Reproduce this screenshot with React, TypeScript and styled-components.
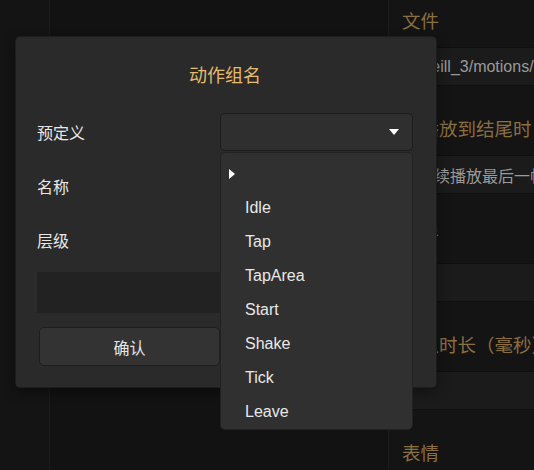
import styled, { createGlobalStyle } from "styled-components";

const GlobalStyle = createGlobalStyle`
  html, body {
    margin: 0;
    padding: 0;
    background: #131313;
  }
  body {
    font-family: "Liberation Sans", "Noto Sans CJK SC", sans-serif;
  }
  * {
    box-sizing: border-box;
  }
`;

const Screen = styled.div`
  position: relative;
  display: flex;
  width: 100vw;
  height: 100vh;
  overflow: hidden;
  background: #131313;
`;

const Sidebar = styled.div`
  width: 50px;
  flex-shrink: 0;
  background: #141414;
  border-right: 1px solid #1c1c1c;
`;

const Workspace = styled.div`
  flex: 1;
  background: #121212;
  border-right: 1px solid #1d1d1d;
`;

const Inspector = styled.div`
  width: 145px;
  flex-shrink: 0;
  display: flex;
  flex-direction: column;
  background: #141414;
  overflow: hidden;
`;

const SectionTitle = styled.div`
  height: 47px;
  padding: 11px 0 0 13px;
  font-size: 18.5px;
  line-height: 22px;
  color: #8a6f43;
  white-space: nowrap;
`;

const Field = styled.div`
  height: 39px;
  margin-bottom: 22px;
  display: flex;
  align-items: center;
  padding-left: 29px;
  background: #1b1b1b;
  border-top: 1px solid #0f0f0f;
  border-bottom: 1px solid #0f0f0f;
  font-size: 16px;
  color: #9a9a9a;
  white-space: nowrap;
`;

const Dialog = styled.div`
  position: absolute;
  left: 16px;
  top: 37px;
  width: 420px;
  height: 350px;
  display: flex;
  flex-direction: column;
  padding: 27px 23px 21px 21px;
  background: #2a2a2a;
  border-radius: 4px;
  box-shadow: 0 0 0 1px #1d1d1d, 0 4px 14px rgba(0, 0, 0, 0.45);
`;

const Title = styled.div`
  text-align: center;
  font-size: 18px;
  line-height: 24px;
  color: #e5bb6d;
  margin-bottom: 25px;
`;

const Form = styled.div`
  display: flex;
  flex-direction: column;
  gap: 16px;
`;

const Row = styled.div`
  display: flex;
  align-items: center;
  height: 38px;
`;

const Label = styled.div`
  width: 183px;
  flex-shrink: 0;
  font-size: 16px;
  color: #e8e8e8;
`;

const SelectWrap = styled.div`
  position: relative;
  flex: 1;
  height: 38px;
`;

const SelectBox = styled.div`
  height: 38px;
  display: flex;
  align-items: center;
  justify-content: flex-end;
  padding-right: 13px;
  background: #2f2f2f;
  border: 1px solid #1c1c1c;
  border-radius: 5px;
`;

const TextInput = styled.div`
  flex: 1;
  height: 38px;
  background: #2f2f2f;
  border: 1px solid #1c1c1c;
  border-radius: 5px;
`;

const Menu = styled.div`
  position: absolute;
  top: calc(100% + 1px);
  left: 0;
  right: 0;
  z-index: 2;
  padding-top: 4px;
  background: #303030;
  border: 1px solid #222222;
  border-radius: 5px;
`;

const MenuItem = styled.div`
  height: 34px;
  display: flex;
  align-items: center;
  padding-left: 8px;
  font-size: 16px;
  color: #e8e8e8;
`;

const Marker = styled.span<{ $visible: boolean }>`
  width: 16px;
  display: flex;
  align-items: center;
  visibility: ${({ $visible }) => ($visible ? "visible" : "hidden")};
`;

const Preview = styled.div`
  margin-top: 13px;
  height: 41px;
  background: #222222;
`;

const Actions = styled.div`
  margin-top: 14px;
  display: grid;
  grid-template-columns: 1fr 1fr;
  gap: 10px;
  padding: 0 2px;
`;

const Button = styled.button`
  height: 39px;
  background: #333333;
  border: 1px solid #1e1e1e;
  border-radius: 5px;
  font-family: inherit;
  font-size: 16px;
  color: #e6e6e6;
`;

const presets = ["", "Idle", "Tap", "TapArea", "Start", "Shake", "Tick", "Leave"];

const inspector = [
  { title: "文件", value: "Meill_3/motions/idle_01.motion3.json" },
  { title: "当播放到结尾时", value: "继续播放最后一帧" },
  { title: "声音", value: "" },
  { title: "淡入时长（毫秒）", value: "" },
  { title: "表情", value: "" },
];

export default function App() {
  return (
    <>
      <GlobalStyle />
      <Screen>
        <Sidebar />
        <Workspace />
        <Inspector>
          {inspector.map((item, i) => (
            <div key={item.title}>
              <SectionTitle>{item.title}</SectionTitle>
              {i < inspector.length - 1 && <Field>{item.value}</Field>}
            </div>
          ))}
        </Inspector>

        <Dialog>
          <Title>动作组名</Title>
          <Form>
            <Row>
              <Label>预定义</Label>
              <SelectWrap>
                <SelectBox>
                  <svg width="10" height="6" viewBox="0 0 10 6">
                    <polygon points="0,0 10,0 5,6" fill="#ffffff" />
                  </svg>
                </SelectBox>
                <Menu>
                  {presets.map((p, i) => (
                    <MenuItem key={p || "none"}>
                      <Marker $visible={i === 0}>
                        <svg width="6" height="10" viewBox="0 0 6 10">
                          <polygon points="0,0 6,5 0,10" fill="#ffffff" />
                        </svg>
                      </Marker>
                      {p}
                    </MenuItem>
                  ))}
                </Menu>
              </SelectWrap>
            </Row>
            <Row>
              <Label>名称</Label>
              <TextInput />
            </Row>
            <Row>
              <Label>层级</Label>
              <TextInput />
            </Row>
          </Form>
          <Preview />
          <Actions>
            <Button>确认</Button>
            <Button>取消</Button>
          </Actions>
        </Dialog>
      </Screen>
    </>
  );
}
